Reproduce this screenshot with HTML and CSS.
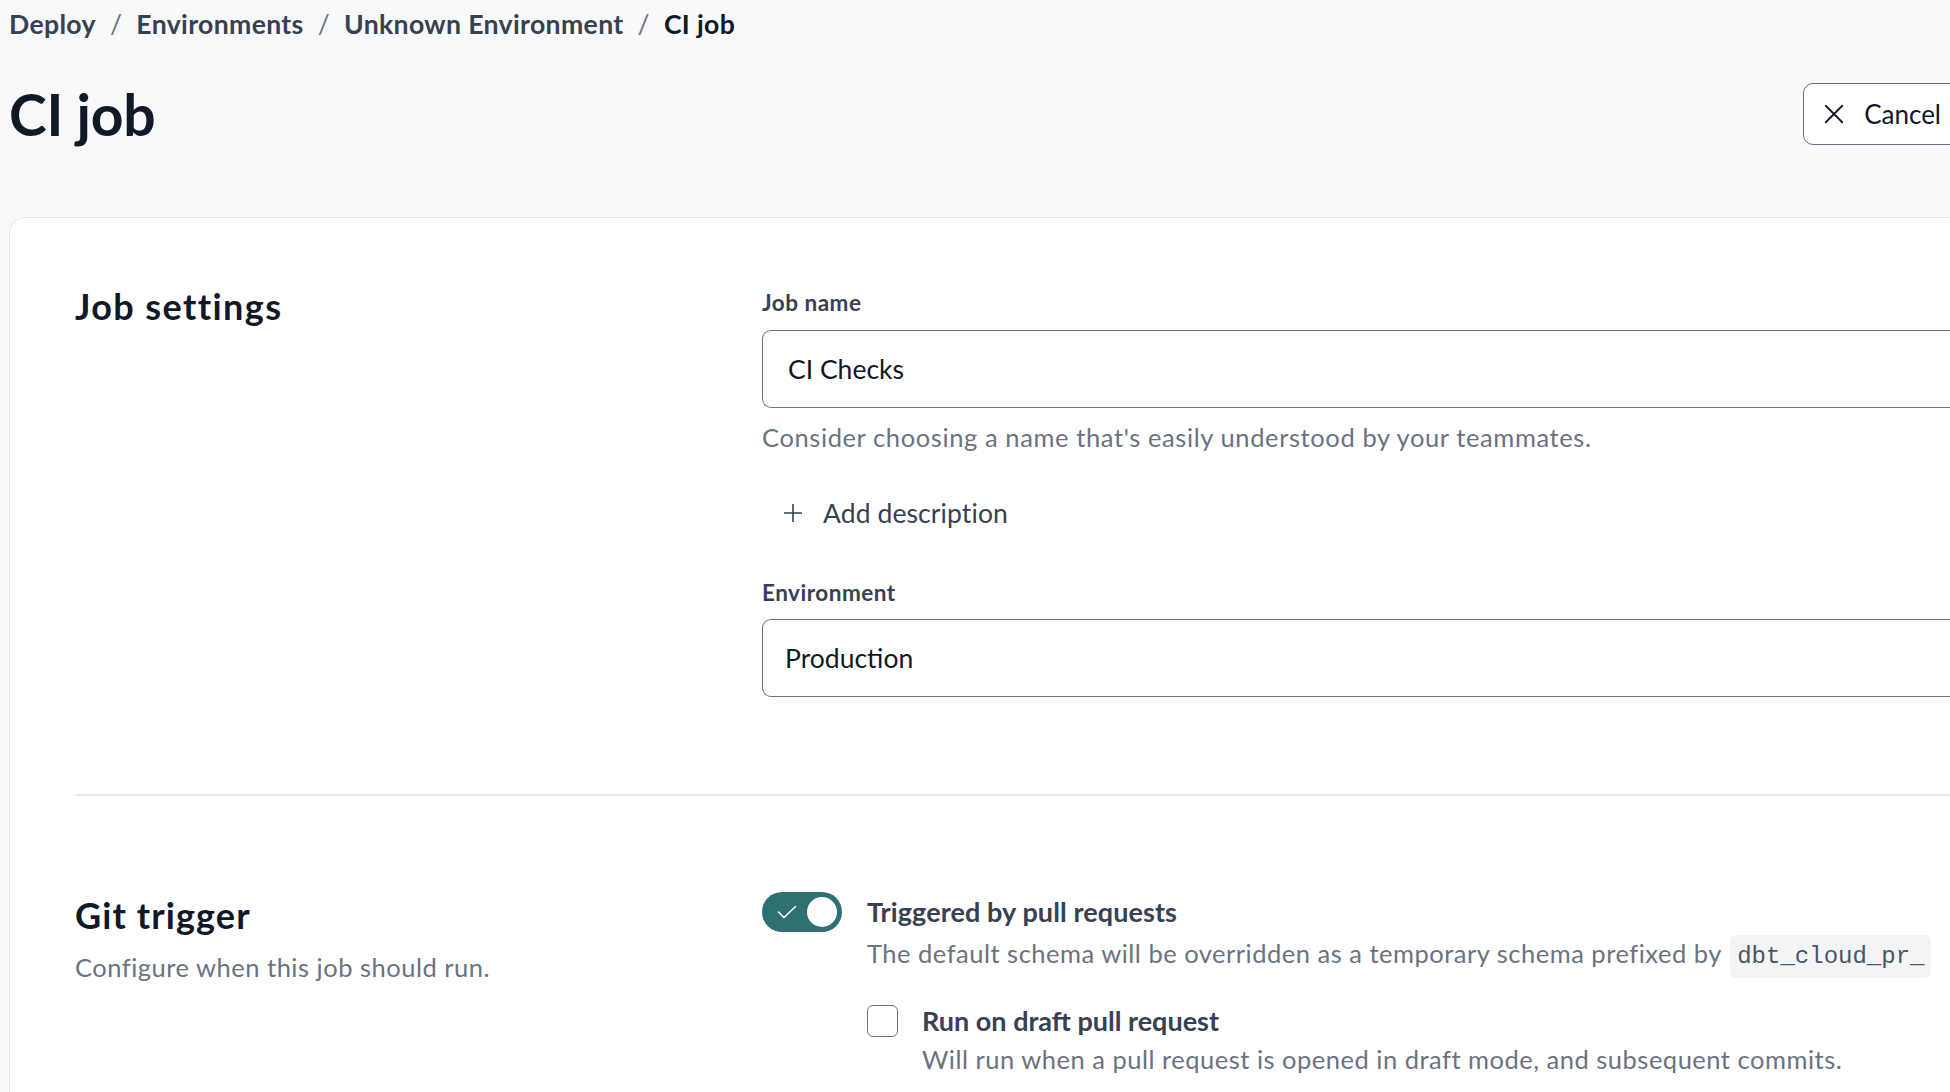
FILE: index.html
```html
<!DOCTYPE html>
<html lang="en">
<head>
<meta charset="utf-8">
<title>CI job</title>
<link rel="stylesheet" href="styles.css">
</head>
<body>
<div class="page">
  <header class="top">
    <nav class="crumbs">
      <a class="crumb">Deploy</a><span class="sep">/</span>
      <a class="crumb">Environments</a><span class="sep">/</span>
      <a class="crumb">Unknown Environment</a><span class="sep">/</span>
      <span class="crumb current">CI job</span>
    </nav>
    <div class="title-row">
      <h1 class="title">CI job</h1>
      <button class="cancel" type="button">
        <svg class="cancel-icon" viewBox="0 0 24 24" width="22" height="22" aria-hidden="true"><path d="M3 3 L21 21 M21 3 L3 21" fill="none" stroke="#111827" stroke-width="2" stroke-linecap="round"/></svg>
        <span>Cancel</span>
      </button>
    </div>
  </header>

  <section class="card">
    <div class="section section-job">
      <div class="sec-left">
        <h2 class="sec-title">Job settings</h2>
      </div>
      <div class="sec-right">
        <label class="field-label">Job name</label>
        <div class="input"><span class="input-text">CI Checks</span></div>
        <p class="help">Consider choosing a name that's easily understood by your teammates.</p>
        <button class="add-desc" type="button">
          <svg viewBox="0 0 20 20" width="20" height="20" aria-hidden="true"><path d="M10 1 V19 M1 10 H19" fill="none" stroke="#374151" stroke-width="1.6"/></svg>
          <span>Add description</span>
        </button>
        <label class="field-label env-label">Environment</label>
        <div class="input select"><span class="input-text">Production</span></div>
      </div>
    </div>

    <div class="divider"></div>

    <div class="section section-git">
      <div class="sec-left">
        <h2 class="sec-title git-title">Git trigger</h2>
        <p class="sec-desc">Configure when this job should run.</p>
      </div>
      <div class="sec-right">
        <div class="toggle-row">
          <span class="toggle">
            <svg class="toggle-check" viewBox="0 0 20 14" width="20" height="14" aria-hidden="true"><path d="M1.5 7 L7 12.5 L18.5 1.5" fill="none" stroke="#ffffff" stroke-width="1.6" stroke-linecap="round" stroke-linejoin="round"/></svg>
            <span class="knob"></span>
          </span>
          <div class="opt-text">
            <div class="opt-title">Triggered by pull requests</div>
            <div class="opt-desc">The default schema will be overridden as a temporary schema prefixed by <code class="chip">dbt_cloud_pr_</code></div>
            <div class="check-row">
              <span class="checkbox"></span>
              <div class="check-text">
                <div class="opt-title">Run on draft pull request</div>
                <div class="opt-desc">Will run when a pull request is opened in draft mode, and subsequent commits.</div>
              </div>
            </div>
          </div>
        </div>
      </div>
    </div>
  </section>
</div>
</body>
</html>
```

FILE: styles.css
```css
html, body {
  margin: 0;
  padding: 0;
}
body {
  background: #f8f9fb;
  font-family: "Lato", "Noto Sans", sans-serif;
  color: #111827;
  overflow: hidden;
  height: 1092px;
}
.page {
  width: 1966px;
  padding: 8px 0 0 9px;
  box-sizing: border-box;
}
.crumbs {
  display: flex;
  align-items: center;
  height: 32px;
  font-size: 26.6px;
  font-weight: 700;
  letter-spacing: 0.35px;
  color: #374151;
}
.crumb {
  color: #374151;
  text-decoration: none;
}
.crumb.current {
  color: #111827;
}
.sep {
  font-weight: 400;
  color: #6b7280;
  margin: 0 14px;
}
.title-row {
  display: flex;
  align-items: center;
  justify-content: space-between;
  height: 62px;
  margin-top: 43px;
}
.title {
  margin: 0;
  font-size: 57px;
  line-height: 62px;
  font-weight: 700;
  color: #111827;
  letter-spacing: -0.3px;
}
.cancel {
  display: flex;
  align-items: center;
  gap: 19px;
  height: 62px;
  padding: 0 24px 0 19px;
  border: 1.5px solid #6b7280;
  border-radius: 10px;
  background: #ffffff;
  font-family: inherit;
  font-size: 26px;
  color: #111827;
  box-sizing: border-box;
}
.card {
  margin-top: 72px;
  background: #ffffff;
  border: 1.5px solid #e5e7eb;
  border-right: none;
  border-radius: 16px 0 0 0;
  padding: 0 0 0 65px;
  min-height: 900px;
}
.section {
  display: grid;
  grid-template-columns: 687px 1fr;
}
.section-job {
  padding: 70px 0 97px;
}
.sec-title {
  margin: 0;
  font-size: 36px;
  line-height: 36px;
  font-weight: 700;
  letter-spacing: 1.4px;
  color: #111827;
}
.git-title {
  letter-spacing: 1.1px;
}
.sec-right {
  min-width: 0;
}
.field-label {
  display: block;
  font-size: 22.5px;
  line-height: 30px;
  font-weight: 700;
  letter-spacing: 0.5px;
  color: #374151;
}
.input {
  margin-top: 12px;
  height: 78px;
  border: 1.5px solid #6b7280;
  border-right: none;
  border-radius: 9px 0 0 9px;
  display: flex;
  align-items: center;
  padding-left: 25px;
  box-sizing: border-box;
  background: #ffffff;
}
.input.select {
  padding-left: 22px;
  margin-top: 11px;
}
.input-text {
  font-size: 26.5px;
  color: #111827;
}
.help {
  margin: 13px 0 0;
  font-size: 25.5px;
  line-height: 32px;
  letter-spacing: 0.6px;
  color: #6b7280;
}
.add-desc {
  display: flex;
  align-items: center;
  gap: 20px;
  height: 48px;
  margin-top: 36px;
  padding: 0 0 0 21px;
  border: none;
  background: transparent;
  font-family: inherit;
  font-size: 26.5px;
  letter-spacing: 0.1px;
  color: #374151;
}
.env-label {
  margin-top: 41px;
}
.divider {
  height: 2px;
  background: #e5e7eb;
}
.section-git {
  padding-top: 96px;
}
.git-title {
  margin-top: 5px;
}
.sec-desc {
  margin: 18px 0 0;
  font-size: 25.5px;
  line-height: 32px;
  letter-spacing: 0.5px;
  color: #6b7280;
}
.toggle-row {
  display: flex;
  align-items: flex-start;
  gap: 25px;
}
.toggle {
  position: relative;
  flex: none;
  width: 80px;
  height: 40px;
  border-radius: 20px;
  background: #2f7072;
  display: flex;
  align-items: center;
  justify-content: space-between;
  padding: 0 5px 0 15px;
  box-sizing: border-box;
}
.knob {
  width: 30px;
  height: 30px;
  border-radius: 50%;
  background: #ffffff;
}
.opt-title {
  font-size: 27px;
  line-height: 40px;
  font-weight: 700;
  letter-spacing: 0.1px;
  color: #374151;
}
.opt-desc {
  font-size: 25.5px;
  line-height: 42px;
  letter-spacing: 0.5px;
  color: #6b7280;
}
.chip {
  font-family: "Liberation Mono", "DejaVu Sans Mono", monospace;
  font-size: 24px;
  letter-spacing: 0;
  background: #f3f4f6;
  color: #4b5563;
  border-radius: 6px;
  padding: 8px 7px;
  margin-left: 2px;
}
.check-row {
  display: flex;
  align-items: flex-start;
  gap: 24px;
  margin-top: 27px;
}
.checkbox {
  flex: none;
  width: 31px;
  height: 32px;
  border: 1.5px solid #6b7280;
  border-radius: 6px;
  box-sizing: border-box;
  background: #ffffff;
}
.check-text .opt-title {
  line-height: 32px;
  letter-spacing: 0;
}
.check-text .opt-desc {
  margin-top: 4px;
  line-height: 36px;
}
```
